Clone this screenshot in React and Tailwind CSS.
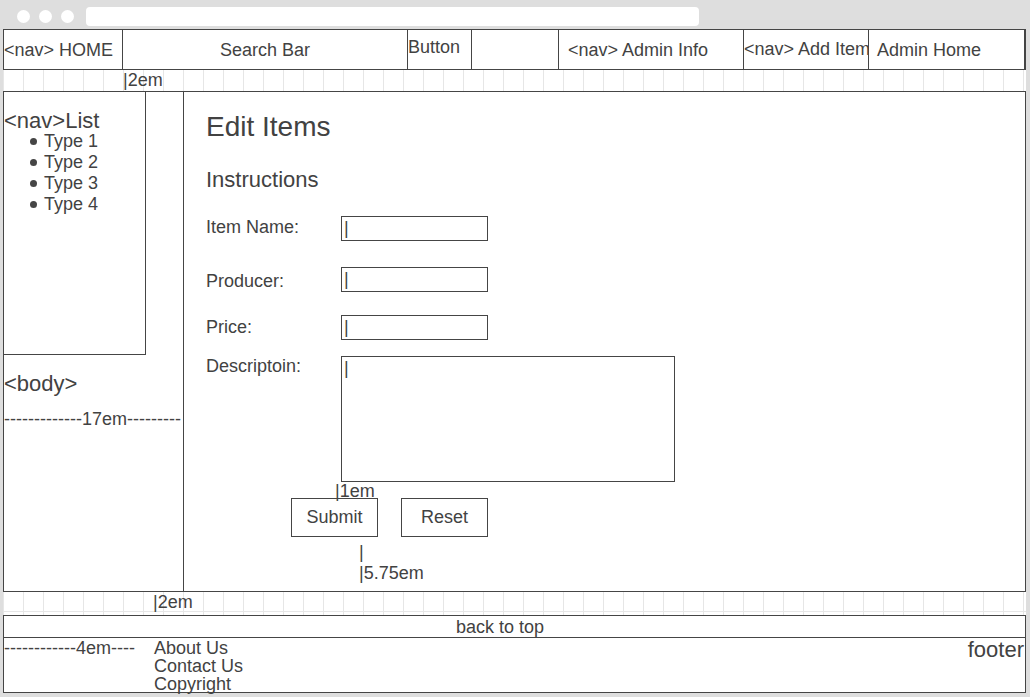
import React from "react";

const grid =
  "bg-[linear-gradient(to_right,#e6e6e6_1px,transparent_1px)] bg-size-[20px_20px]";

function Field({ label, labelMt, big = false }) {
  return (
    <div className="flex items-start">
      <div className={`w-[135px] leading-[21px] ${labelMt}`}>{label}</div>
      <div
        className={`${big ? "w-[334px] h-[126px]" : "w-[147px] h-[25px]"} pt-[1px] border border-[#454545] pl-[2px] leading-[21px]`}
      >
        |
      </div>
    </div>
  );
}

export default function App() {
  return (
    <div className="w-[1030px] h-[697px] bg-[#dedede] overflow-hidden font-['Liberation_Sans',Arial,sans-serif] text-[#424242] text-[18px]">
      {/* browser chrome */}
      <div className="h-[29px] flex items-center pt-[3px] pl-[17px]">
        <div className="w-[13px] h-[13px] rounded-full bg-white" />
        <div className="w-[13px] h-[13px] rounded-full bg-white ml-[9px]" />
        <div className="w-[13px] h-[13px] rounded-full bg-white ml-[9px]" />
        <div className="w-[613px] h-[19px] rounded-[4px] bg-white ml-[12px]" />
      </div>

      <div className="ml-[3px] w-[1023px] h-[664px] bg-white flex flex-col">
        {/* header */}
        <div className="h-[41px] border border-[#454545] flex whitespace-nowrap shrink-0">
          <div className="w-[118px] flex items-center pt-[2px] leading-[21px]">&lt;nav&gt; HOME</div>
          <div className="w-[285px] border-l border-[#454545] flex items-center justify-center pt-[2px] leading-[21px]">
            Search Bar
          </div>
          <div className="w-[65px] border-x border-[#454545] pt-[7px] leading-[21px]">Button</div>
          <div className="w-[86px]" />
          <div className="w-[185px] border-l border-[#454545] flex items-center pl-[9px] pt-[2px] leading-[21px]">
            &lt;nav&gt; Admin Info
          </div>
          <div className="w-[125px] border-l border-[#454545] flex items-center pb-[1px] overflow-hidden leading-[21px]">
            &lt;nav&gt; Add Item
          </div>
          <div className="flex-1 border-x border-[#454545] flex items-center pl-[8px] pt-[2px] leading-[21px]">
            Admin Home
          </div>
        </div>

        {/* gap row */}
        <div className={`h-[21px] shrink-0 ${grid} flex items-center leading-[21px]`}>
          <span className="ml-[120px]">|2em</span>
        </div>

        {/* main */}
        <div className="h-[501px] shrink-0 border border-[#454545] flex">
          <div className="w-[180px] border-r border-[#454545] flex flex-col">
            <div className="w-[142px] h-[263px] border-r border-b border-[#454545] pt-[18px]">
              <div className="text-[22px] leading-[21px]">&lt;nav&gt;List</div>
              <ul className="leading-[21px]">
                {["Type 1", "Type 2", "Type 3", "Type 4"].map((t) => (
                  <li key={t} className="flex items-center">
                    <span className="ml-[26px] w-[7px] h-[7px] rounded-full bg-[#454545]" />
                    <span className="ml-[7px]">{t}</span>
                  </li>
                ))}
              </ul>
            </div>
            <div className="mt-[16px] text-[22px] leading-[26px]">&lt;body&gt;</div>
            <div className="mt-[12px] leading-[21px] whitespace-nowrap overflow-hidden">
              -------------17em---------
            </div>
          </div>

          <div className="flex-1 pl-[22px] flex flex-col">
            <div className="mt-[19px] text-[28px] leading-[32px]">Edit Items</div>
            <div className="mt-[24px] text-[22px] leading-[26px]">Instructions</div>
            <div className="mt-[23px]">
              <Field label="Item Name:" labelMt="mt-[1px]" />
            </div>
            <div className="mt-[26px] h-[25px]">
              <Field label="Producer:" labelMt="mt-[4px]" />
            </div>
            <div className="mt-[23px] h-[25px]">
              <Field label="Price:" labelMt="mt-[2px]" />
            </div>
            <div className="mt-[16px]">
              <Field label="Descriptoin:" labelMt="mt-0" big />
            </div>
            <div className="ml-[129px] leading-[16px] pt-[1px]">|1em</div>
            <div className="flex ml-[85px] -mt-[1px]">
              <div className="w-[87px] h-[39px] border border-[#454545] flex items-center justify-center">
                Submit
              </div>
              <div className="w-[87px] h-[39px] border border-[#454545] flex items-center justify-center ml-[23px]">
                Reset
              </div>
            </div>
            <div className="ml-[153px] mt-[5px] leading-[21px]">|</div>
            <div className="ml-[153px] leading-[21px]">|5.75em</div>
          </div>
        </div>

        {/* gap row */}
        <div className={`h-[23px] shrink-0 ${grid} flex flex-col`}>
          <div className="h-[20px] flex items-center pt-[1px] leading-[21px] border-b border-[#e6e6e6]">
            <span className="ml-[150px]">|2em</span>
          </div>
        </div>

        {/* back to top */}
        <div className="h-[23px] shrink-0 border border-[#454545] pl-[452px] pt-[1px] leading-[21px]">back to top</div>

        {/* footer */}
        <div className="h-[55px] shrink-0 border-x border-b border-[#454545] flex items-start">
          <div className="w-[150px] pt-[1px] leading-[18px] whitespace-nowrap">------------4em----</div>
          <div className="flex flex-col pt-[1px] leading-[18px]">
            <span>About Us</span>
            <span>Contact Us</span>
            <span>Copyright</span>
          </div>
          <div className="ml-auto pr-[1px] -mt-[1px] text-[22px] leading-[26px]">footer</div>
        </div>
      </div>
    </div>
  );
}
